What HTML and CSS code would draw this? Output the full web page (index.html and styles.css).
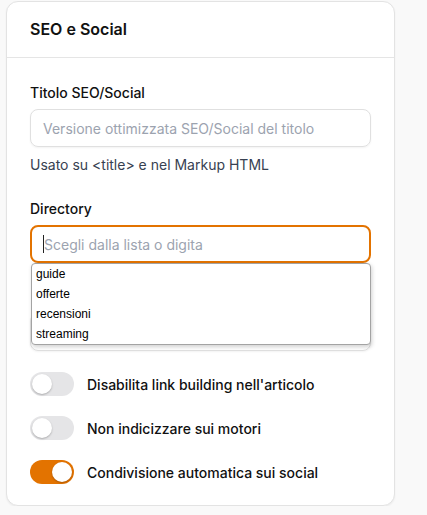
FILE: index.html
```html
<!DOCTYPE html>
<html lang="it">
<head>
<meta charset="utf-8">
<title>SEO e Social</title>
<link rel="stylesheet" href="styles.css">
</head>
<body>
<section class="card">
  <header class="card-head">SEO e Social</header>
  <div class="card-body">
    <div class="field">
      <label class="label">Titolo SEO/Social</label>
      <div class="input"><span class="ph">Versione ottimizzata SEO/Social del titolo</span></div>
      <p class="help">Usato su &lt;title&gt; e nel Markup HTML</p>
    </div>
    <div class="field dir-field">
      <label class="label">Directory</label>
      <div class="input focus"><span class="caret"></span><span class="ph">Scegli dalla lista o digita</span></div>
      <ul class="datalist">
        <li>guide</li>
        <li>offerte</li>
        <li>recensioni</li>
        <li>streaming</li>
      </ul>
    </div>
    <div class="field">
      <span class="label label-hidden"></span>
      <div class="input"></div>
    </div>
    <div class="toggles">
      <div class="toggle-row"><span class="switch"><span class="knob"></span></span><span class="tlabel">Disabilita link building nell'articolo</span></div>
      <div class="toggle-row"><span class="switch"><span class="knob"></span></span><span class="tlabel">Non indicizzare sui motori</span></div>
      <div class="toggle-row"><span class="switch on"><span class="knob"></span></span><span class="tlabel">Condivisione automatica sui social</span></div>
    </div>
  </div>
</section>
</body>
</html>
```
FILE: styles.css
```css
* { box-sizing: border-box; }
html, body { margin: 0; padding: 0; }
body {
  background: #f9f9f9;
  font-family: Inter, "Noto Sans", sans-serif;
  color: #111;
  padding: 1px 0 0 6px;
}
.card {
  width: 389px;
  background: #fff;
  border: 1px solid #e3e3e3;
  border-radius: 12px;
  box-shadow: 0 1px 2px rgba(0,0,0,0.06);
}
.card-head {
  padding: 17px 23px 18px;
  font-size: 16px;
  line-height: 20px;
  font-weight: 600;
  color: #111;
  border-bottom: 1px solid #e5e5e5;
}
.card-body {
  padding: 25px 23px 21px;
  display: flex;
  flex-direction: column;
  gap: 24px;
}
.field { display: flex; flex-direction: column; position: relative; }
.label {
  font-size: 14px;
  line-height: 20px;
  font-weight: 500;
  color: #111;
  margin-bottom: 6px;
}
.label-hidden { display: block; height: 20px; }
.input {
  height: 38px;
  border: 1px solid #e0e0e0;
  border-radius: 8px;
  padding: 0 12px;
  display: flex;
  align-items: center;
  font-size: 14px;
  box-shadow: 0 1px 2px rgba(0,0,0,0.05);
}
.input.focus {
  border: 2px solid #e37300;
  padding: 0 11px;
  height: 38px;
  box-shadow: none;
}
.ph { color: #9ca3af; white-space: nowrap; }
.caret {
  width: 1px;
  height: 18px;
  background: #222;
}
.help {
  margin: 8px 0 0;
  font-size: 14px;
  line-height: 20px;
  color: #374151;
}
.datalist {
  position: absolute;
  left: 1px;
  top: 64px;
  width: 340px;
  margin: 0;
  padding: 0;
  list-style: none;
  background: #fff;
  border: 1px solid #a3a3a3;
  border-radius: 4px;
  box-shadow: 1px 2px 4px rgba(0,0,0,0.18);
  z-index: 5;
  font-family: "Liberation Sans", Arial, sans-serif;
  font-size: 12px;
}
.datalist li {
  height: 20px;
  line-height: 20px;
  padding-left: 4px;
  color: #000;
}
.toggles {
  display: flex;
  flex-direction: column;
  gap: 20px;
  margin-top: -3px;
}
.toggle-row { display: flex; align-items: center; gap: 13px; height: 24px; }
.switch {
  width: 44px;
  height: 24px;
  border-radius: 12px;
  background: #e5e5e7;
  position: relative;
  flex: none;
}
.knob {
  position: absolute;
  left: 2px;
  top: 2px;
  width: 20px;
  height: 20px;
  border-radius: 50%;
  background: #fff;
  box-shadow: 0 1px 2px rgba(0,0,0,0.25);
}
.switch.on { background: #e37300; }
.switch.on .knob { left: 22px; }
.tlabel { font-size: 14px; font-weight: 500; color: #111; }
```
